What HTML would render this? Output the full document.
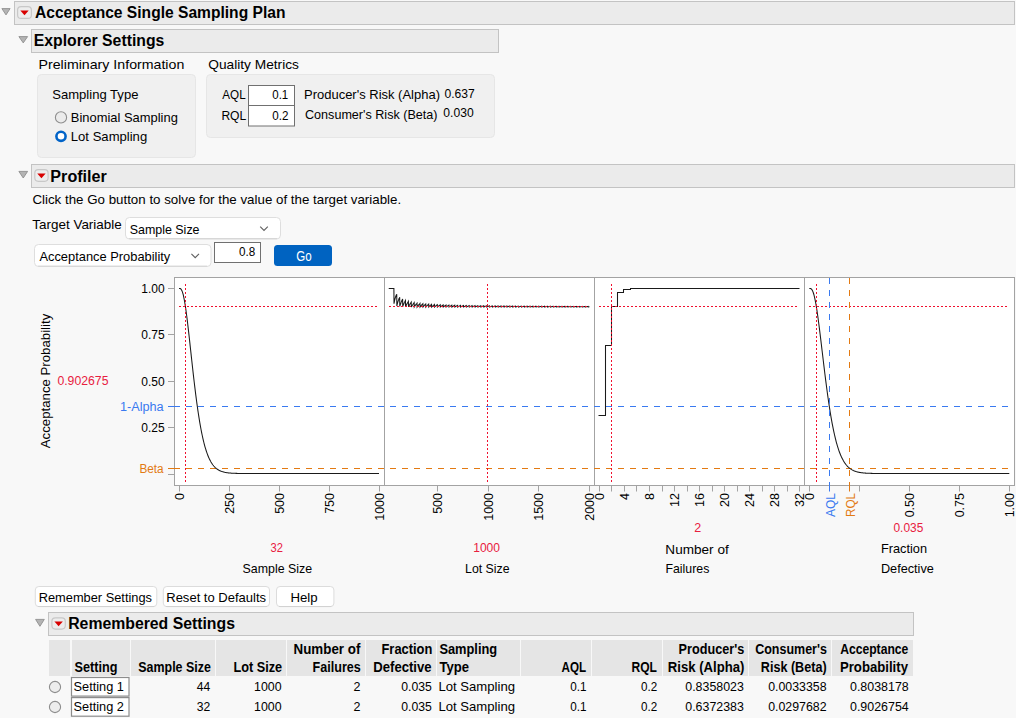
<!DOCTYPE html>
<html><head><meta charset="utf-8"><style>
html,body{margin:0;padding:0;background:#f8f8f8;}
svg{display:block;font-family:"Liberation Sans",sans-serif;}
</style></head><body>
<svg width="1016" height="718" viewBox="0 0 1016 718">
<rect x="0" y="0" width="1016" height="718" fill="#f8f8f8" stroke="none" stroke-width="1" rx="0" />
<rect x="14.5" y="1.5" width="1000" height="23" fill="#ebebeb" stroke="#c3c3c3" stroke-width="1" rx="0" />
<polygon points="1.9,8.6 10.1,8.6 6.0,14.9" fill="#b4b4b4" stroke="#8e8e8e" stroke-width="0.9" stroke-linejoin="miter"/>
<rect x="17.6" y="6.6" width="13.8" height="11.8" fill="#ededed" stroke="#c8c8c8" stroke-width="1.2" rx="3.5" />
<polygon points="20.3,10.6 28.7,10.6 24.5,15.2" fill="#d80000"/>
<text x="35.00" y="17.70" font-size="16" font-weight="bold" fill="#000" textLength="250.44" lengthAdjust="spacingAndGlyphs" >Acceptance Single Sampling Plan</text>
<rect x="31.5" y="29.5" width="467" height="23" fill="#ebebeb" stroke="#c3c3c3" stroke-width="1" rx="0" />
<polygon points="18.9,36.6 27.6,36.6 23.25,42.9" fill="#b4b4b4" stroke="#8e8e8e" stroke-width="0.9" stroke-linejoin="miter"/>
<text x="33.82" y="46.00" font-size="16" font-weight="bold" fill="#000" textLength="130.46" lengthAdjust="spacingAndGlyphs" >Explorer Settings</text>
<text x="38.54" y="69.10" font-size="13.33" font-weight="normal" fill="#000" textLength="145.76" lengthAdjust="spacingAndGlyphs" >Preliminary Information</text>
<rect x="37.5" y="74.5" width="158" height="83" fill="#f0f0f0" stroke="#e6e6e6" stroke-width="1" rx="4" />
<text x="52.22" y="99.20" font-size="13.33" font-weight="normal" fill="#000" textLength="86.20" lengthAdjust="spacingAndGlyphs" >Sampling Type</text>
<circle cx="61" cy="117.4" r="5.6" fill="#ebebeb" stroke="#8e8e8e" stroke-width="1.1"/>
<text x="70.83" y="122.20" font-size="13.33" font-weight="normal" fill="#000" textLength="107.05" lengthAdjust="spacingAndGlyphs" >Binomial Sampling</text>
<circle cx="61" cy="136.3" r="4.6" fill="#ffffff" stroke="#0063c8" stroke-width="2.6"/>
<text x="70.82" y="141.00" font-size="13.33" font-weight="normal" fill="#000" textLength="76.36" lengthAdjust="spacingAndGlyphs" >Lot Sampling</text>
<text x="208.30" y="69.10" font-size="13.33" font-weight="normal" fill="#000" textLength="90.64" lengthAdjust="spacingAndGlyphs" >Quality Metrics</text>
<rect x="206.5" y="74.5" width="288" height="63" fill="#f0f0f0" stroke="#e6e6e6" stroke-width="1" rx="4" />
<text x="222.30" y="98.90" font-size="13.33" font-weight="normal" fill="#000" textLength="23.31" lengthAdjust="spacingAndGlyphs" >AQL</text>
<text x="221.39" y="119.90" font-size="13.33" font-weight="normal" fill="#000" textLength="24.88" lengthAdjust="spacingAndGlyphs" >RQL</text>
<rect x="248.5" y="85.5" width="46" height="20" fill="#fff" stroke="#707070" stroke-width="1" rx="0" />
<rect x="248.5" y="105.5" width="46" height="20.5" fill="#fff" stroke="#707070" stroke-width="1" rx="0" />
<text x="272.30" y="98.90" font-size="13.33" font-weight="normal" fill="#000" textLength="15.96" lengthAdjust="spacingAndGlyphs" >0.1</text>
<text x="272.30" y="119.90" font-size="13.33" font-weight="normal" fill="#000" textLength="16.16" lengthAdjust="spacingAndGlyphs" >0.2</text>
<text x="304.03" y="98.90" font-size="13.33" font-weight="normal" fill="#000" textLength="135.94" lengthAdjust="spacingAndGlyphs" >Producer's Risk (Alpha)</text>
<text x="444.50" y="97.70" font-size="12" font-weight="normal" fill="#000" textLength="30.33" lengthAdjust="spacingAndGlyphs" >0.637</text>
<text x="305.00" y="118.70" font-size="13.33" font-weight="normal" fill="#000" textLength="132.50" lengthAdjust="spacingAndGlyphs" >Consumer's Risk (Beta)</text>
<text x="443.30" y="117.40" font-size="12" font-weight="normal" fill="#000" textLength="30.33" lengthAdjust="spacingAndGlyphs" >0.030</text>
<rect x="31.5" y="164.5" width="983" height="23" fill="#ebebeb" stroke="#c3c3c3" stroke-width="1" rx="0" />
<polygon points="18.9,171.4 27.6,171.4 23.25,178.0" fill="#b4b4b4" stroke="#8e8e8e" stroke-width="0.9" stroke-linejoin="miter"/>
<rect x="34.800000000000004" y="169.7" width="13.3" height="11.600000000000012" fill="#ededed" stroke="#c8c8c8" stroke-width="1.2" rx="3.5" />
<polygon points="37.25,173.6 45.650000000000006,173.6 41.45,178.2" fill="#d80000"/>
<text x="50.39" y="181.70" font-size="16" font-weight="bold" fill="#000" textLength="56.42" lengthAdjust="spacingAndGlyphs" >Profiler</text>
<text x="32.40" y="204.00" font-size="13.33" font-weight="normal" fill="#000" textLength="368.75" lengthAdjust="spacingAndGlyphs" >Click the Go button to solve for the value of the target variable.</text>
<text x="32.30" y="228.70" font-size="13.33" font-weight="normal" fill="#000" textLength="89.48" lengthAdjust="spacingAndGlyphs" >Target Variable</text>
<rect x="125.5" y="217.5" width="155" height="21.5" fill="#fff" stroke="#dedede" stroke-width="1" rx="4" />
<text x="129.67" y="233.80" font-size="13.33" font-weight="normal" fill="#000" textLength="69.87" lengthAdjust="spacingAndGlyphs" >Sample Size</text>
<polyline points="260.2,226.6 264,230.4 267.8,226.6" fill="none" stroke="#606060" stroke-width="1.1"/>
<path d="M129,238.6 H277" stroke="#d4d4d4" stroke-width="1"/>
<rect x="34.5" y="244.5" width="176.5" height="22" fill="#fff" stroke="#dedede" stroke-width="1" rx="4" />
<text x="39.40" y="261.00" font-size="13.33" font-weight="normal" fill="#000" textLength="130.91" lengthAdjust="spacingAndGlyphs" >Acceptance Probability</text>
<polyline points="191.4,253.8 195.2,257.6 199.0,253.8" fill="none" stroke="#606060" stroke-width="1.1"/>
<path d="M38,266.1 H207" stroke="#d4d4d4" stroke-width="1"/>
<rect x="214.5" y="242.5" width="46" height="20" fill="#fff" stroke="#707070" stroke-width="1" rx="0" />
<text x="238.90" y="256.00" font-size="13.33" font-weight="normal" fill="#000" textLength="16.27" lengthAdjust="spacingAndGlyphs" >0.8</text>
<rect x="274" y="245" width="58" height="21" fill="#0063c1" stroke="none" stroke-width="1" rx="3.5" />
<text x="296.20" y="260.90" font-size="14.2" font-weight="normal" fill="#fff" textLength="15.45" lengthAdjust="spacingAndGlyphs" >Go</text>
<rect x="174.5" y="277.5" width="840" height="208" fill="#fff" stroke="#a3a3a3" stroke-width="1" rx="0" />
<line x1="384.5" y1="277" x2="384.5" y2="486" stroke="#a3a3a3" stroke-width="1" />
<line x1="594.5" y1="277" x2="594.5" y2="486" stroke="#a3a3a3" stroke-width="1" />
<line x1="804.5" y1="277" x2="804.5" y2="486" stroke="#a3a3a3" stroke-width="1" />
<line x1="168" y1="288.5" x2="174" y2="288.5" stroke="#a3a3a3" stroke-width="1" />
<text x="141.30" y="292.70" font-size="12" font-weight="normal" fill="#000" >1.00</text>
<line x1="168" y1="334.5" x2="174" y2="334.5" stroke="#a3a3a3" stroke-width="1" />
<text x="141.30" y="338.70" font-size="12" font-weight="normal" fill="#000" >0.75</text>
<line x1="168" y1="381.5" x2="174" y2="381.5" stroke="#a3a3a3" stroke-width="1" />
<text x="141.30" y="385.70" font-size="12" font-weight="normal" fill="#000" >0.50</text>
<line x1="168" y1="427.5" x2="174" y2="427.5" stroke="#a3a3a3" stroke-width="1" />
<text x="141.30" y="431.70" font-size="12" font-weight="normal" fill="#000" >0.25</text>
<line x1="168" y1="474.5" x2="174" y2="474.5" stroke="#a3a3a3" stroke-width="1" />
<line x1="168" y1="406.5" x2="174.5" y2="406.5" stroke="#3a7af0" stroke-width="1" />
<line x1="168" y1="468.5" x2="174.5" y2="468.5" stroke="#e37a12" stroke-width="1" />
<line x1="174" y1="406.5" x2="1014" y2="406.5" stroke="#3a7af0" stroke-width="1" stroke-dasharray="6,6" />
<line x1="174" y1="468.5" x2="1014" y2="468.5" stroke="#e37a12" stroke-width="1" stroke-dasharray="6,6" />
<text x="119.94" y="410.60" font-size="12" font-weight="normal" fill="#3a7af0" textLength="43.70" lengthAdjust="spacingAndGlyphs" >1-Alpha</text>
<text x="139.42" y="472.60" font-size="12" font-weight="normal" fill="#e37a12" textLength="24.28" lengthAdjust="spacingAndGlyphs" >Beta</text>
<text transform="translate(49.8,381) rotate(-90)" text-anchor="middle" font-size="13.6" textLength="134.5" lengthAdjust="spacingAndGlyphs">Acceptance Probability</text>
<text x="57.40" y="385.10" font-size="12" font-weight="normal" fill="#e8203f" textLength="51.06" lengthAdjust="spacingAndGlyphs" >0.902675</text>
<polyline fill="none" stroke="#1a1a1a" stroke-width="1.05" points="179.00,288.40 179.40,288.40 179.80,288.43 180.20,288.54 180.60,288.76 181.00,289.14 181.40,289.69 181.80,290.43 182.20,291.38 182.60,292.54 183.00,293.91 183.40,295.49 183.80,297.29 184.20,299.29 184.60,301.48 185.00,303.86 185.40,306.41 185.80,309.13 186.20,312.00 186.60,315.01 187.00,318.13 187.40,321.38 187.80,324.71 188.20,328.14 188.60,331.63 189.00,335.18 189.40,338.78 189.80,342.42 190.20,346.08 190.60,349.75 191.00,353.43 191.40,357.10 191.80,360.76 192.20,364.39 192.60,368.00 193.00,371.57 193.40,375.10 193.80,378.57 194.20,382.00 194.60,385.37 195.00,388.67 195.40,391.91 195.80,395.08 196.20,398.18 196.60,401.20 197.00,404.15 197.40,407.02 197.80,409.81 198.20,412.52 198.60,415.15 199.00,417.70 199.40,420.17 199.80,422.56 200.20,424.88 200.60,427.11 201.00,429.26 201.40,431.34 201.80,433.34 202.20,435.26 202.60,437.12 203.00,438.90 203.40,440.61 203.80,442.25 204.20,443.82 204.60,445.33 205.00,446.77 205.40,448.15 205.80,449.47 206.20,450.73 206.60,451.94 207.00,453.09 207.40,454.19 207.80,455.24 208.20,456.24 208.60,457.19 209.00,458.09 209.40,458.95 209.80,459.77 210.20,460.55 210.60,461.29 211.00,461.99 211.40,462.65 211.80,463.29 212.20,463.88 212.60,464.45 213.00,464.99 213.40,465.49 213.80,465.98 214.20,466.43 214.60,466.86 215.00,467.27 215.40,467.65 215.80,468.01 216.20,468.35 216.60,468.67 217.00,468.98 217.40,469.26 217.80,469.53 218.20,469.79 218.60,470.02 219.00,470.25 219.40,470.46 219.80,470.66 220.20,470.84 220.60,471.02 221.00,471.18 221.40,471.34 221.80,471.48 222.20,471.62 222.60,471.75 223.00,471.86 223.40,471.98 223.80,472.08 224.20,472.18 224.60,472.27 225.00,472.36 225.40,472.44 225.80,472.51 226.20,472.58 226.60,472.65 227.00,472.71 227.40,472.76 227.80,472.82 228.20,472.86 228.60,472.91 229.00,472.95 229.40,472.99 229.80,473.03 230.20,473.07 230.60,473.10 231.00,473.13 231.40,473.16 231.80,473.18 232.20,473.21 232.60,473.23 233.00,473.25 233.40,473.27 233.80,473.29 234.20,473.30 234.60,473.32 235.00,473.33 235.40,473.34 235.80,473.36 236.20,473.37 236.60,473.38 237.00,473.39 237.40,473.40 237.80,473.41 238.20,473.41 238.60,473.42 239.00,473.43 239.40,473.43 239.80,473.44 240.20,473.44 240.60,473.45 241.00,473.45 241.40,473.46 241.80,473.46 242.20,473.46 242.60,473.47 243.00,473.47 243.40,473.47 243.80,473.47 244.20,473.48 244.60,473.48 245.00,473.48 245.40,473.48 245.80,473.48 246.20,473.48 246.60,473.49 247.00,473.49 247.40,473.49 247.80,473.49 248.20,473.49 248.60,473.49 249.00,473.49 249.40,473.49 249.80,473.49 250.20,473.49 250.60,473.49 251.00,473.50 251.40,473.50 251.80,473.50 252.20,473.50 252.60,473.50 253.00,473.50 253.40,473.50 253.80,473.50 254.20,473.50 254.60,473.50 255.00,473.50 255.40,473.50 255.80,473.50 256.20,473.50 256.60,473.50 257.00,473.50 257.40,473.50 257.80,473.50 258.20,473.50 258.60,473.50 259.00,473.50 259.40,473.50 259.80,473.50 260.20,473.50 260.60,473.50 261.00,473.50 261.40,473.50 261.80,473.50 262.20,473.50 262.60,473.50 263.00,473.50 263.40,473.50 263.80,473.50 264.20,473.50 264.60,473.50 265.00,473.50 265.40,473.50 265.80,473.50 266.20,473.50 266.60,473.50 267.00,473.50 267.40,473.50 267.80,473.50 268.20,473.50 268.60,473.50 269.00,473.50 269.40,473.50 269.80,473.50 270.20,473.50 270.60,473.50 271.00,473.50 271.40,473.50 271.80,473.50 272.20,473.50 272.60,473.50 273.00,473.50 273.40,473.50 273.80,473.50 274.20,473.50 274.60,473.50 275.00,473.50 275.40,473.50 275.80,473.50 276.20,473.50 276.60,473.50 277.00,473.50 277.40,473.50 277.80,473.50 278.20,473.50 278.60,473.50 279.00,473.50 279.40,473.50 279.80,473.50 280.20,473.50 280.60,473.50 281.00,473.50 281.40,473.50 281.80,473.50 282.20,473.50 282.60,473.50 283.00,473.50 283.40,473.50 283.80,473.50 284.20,473.50 284.60,473.50 285.00,473.50 285.40,473.50 285.80,473.50 286.20,473.50 286.60,473.50 287.00,473.50 287.40,473.50 287.80,473.50 288.20,473.50 288.60,473.50 289.00,473.50 289.40,473.50 289.80,473.50 290.20,473.50 290.60,473.50 291.00,473.50 291.40,473.50 291.80,473.50 292.20,473.50 292.60,473.50 293.00,473.50 293.40,473.50 293.80,473.50 294.20,473.50 294.60,473.50 295.00,473.50 295.40,473.50 295.80,473.50 296.20,473.50 296.60,473.50 297.00,473.50 297.40,473.50 297.80,473.50 298.20,473.50 298.60,473.50 299.00,473.50 299.40,473.50 299.80,473.50 300.20,473.50 300.60,473.50 301.00,473.50 301.40,473.50 301.80,473.50 302.20,473.50 302.60,473.50 303.00,473.50 303.40,473.50 303.80,473.50 304.20,473.50 304.60,473.50 305.00,473.50 305.40,473.50 305.80,473.50 306.20,473.50 306.60,473.50 307.00,473.50 307.40,473.50 307.80,473.50 308.20,473.50 308.60,473.50 309.00,473.50 309.40,473.50 309.80,473.50 310.20,473.50 310.60,473.50 311.00,473.50 311.40,473.50 311.80,473.50 312.20,473.50 312.60,473.50 313.00,473.50 313.40,473.50 313.80,473.50 314.20,473.50 314.60,473.50 315.00,473.50 315.40,473.50 315.80,473.50 316.20,473.50 316.60,473.50 317.00,473.50 317.40,473.50 317.80,473.50 318.20,473.50 318.60,473.50 319.00,473.50 319.40,473.50 319.80,473.50 320.20,473.50 320.60,473.50 321.00,473.50 321.40,473.50 321.80,473.50 322.20,473.50 322.60,473.50 323.00,473.50 323.40,473.50 323.80,473.50 324.20,473.50 324.60,473.50 325.00,473.50 325.40,473.50 325.80,473.50 326.20,473.50 326.60,473.50 327.00,473.50 327.40,473.50 327.80,473.50 328.20,473.50 328.60,473.50 329.00,473.50 329.40,473.50 329.80,473.50 330.20,473.50 330.60,473.50 331.00,473.50 331.40,473.50 331.80,473.50 332.20,473.50 332.60,473.50 333.00,473.50 333.40,473.50 333.80,473.50 334.20,473.50 334.60,473.50 335.00,473.50 335.40,473.50 335.80,473.50 336.20,473.50 336.60,473.50 337.00,473.50 337.40,473.50 337.80,473.50 338.20,473.50 338.60,473.50 339.00,473.50 339.40,473.50 339.80,473.50 340.20,473.50 340.60,473.50 341.00,473.50 341.40,473.50 341.80,473.50 342.20,473.50 342.60,473.50 343.00,473.50 343.40,473.50 343.80,473.50 344.20,473.50 344.60,473.50 345.00,473.50 345.40,473.50 345.80,473.50 346.20,473.50 346.60,473.50 347.00,473.50 347.40,473.50 347.80,473.50 348.20,473.50 348.60,473.50 349.00,473.50 349.40,473.50 349.80,473.50 350.20,473.50 350.60,473.50 351.00,473.50 351.40,473.50 351.80,473.50 352.20,473.50 352.60,473.50 353.00,473.50 353.40,473.50 353.80,473.50 354.20,473.50 354.60,473.50 355.00,473.50 355.40,473.50 355.80,473.50 356.20,473.50 356.60,473.50 357.00,473.50 357.40,473.50 357.80,473.50 358.20,473.50 358.60,473.50 359.00,473.50 359.40,473.50 359.80,473.50 360.20,473.50 360.60,473.50 361.00,473.50 361.40,473.50 361.80,473.50 362.20,473.50 362.60,473.50 363.00,473.50 363.40,473.50 363.80,473.50 364.20,473.50 364.60,473.50 365.00,473.50 365.40,473.50 365.80,473.50 366.20,473.50 366.60,473.50 367.00,473.50 367.40,473.50 367.80,473.50 368.20,473.50 368.60,473.50 369.00,473.50 369.40,473.50 369.80,473.50 370.20,473.50 370.60,473.50 371.00,473.50 371.40,473.50 371.80,473.50 372.20,473.50 372.60,473.50 373.00,473.50 373.40,473.50 373.80,473.50 374.20,473.50 374.60,473.50 375.00,473.50 375.40,473.50 375.80,473.50 376.20,473.50 376.60,473.50 377.00,473.50 377.40,473.50 377.80,473.50 378.20,473.50 378.60,473.50 379.00,473.50"/>
<polyline fill="none" stroke="#1a1a1a" stroke-width="1.05" points="388.73,288.40 388.83,288.40 388.93,288.40 389.03,288.40 389.13,288.40 389.24,288.40 389.34,288.40 389.44,288.40 389.54,288.40 389.64,288.40 389.74,288.40 389.84,288.40 389.94,288.40 390.05,288.40 390.15,288.40 390.25,288.40 390.35,288.40 390.45,288.40 390.55,288.40 390.65,288.40 390.76,288.40 390.86,288.40 390.96,288.40 391.06,288.40 391.16,288.40 391.26,288.40 391.36,288.40 391.47,288.40 391.57,288.40 391.67,288.40 391.77,288.40 391.87,288.40 391.97,288.40 392.07,288.40 392.18,288.40 392.28,288.40 392.38,288.40 392.48,288.40 392.58,288.40 392.68,288.40 392.78,288.40 392.89,288.40 392.99,288.40 393.09,288.40 393.19,288.40 393.29,288.40 393.39,288.40 393.49,288.40 393.60,288.40 393.70,288.40 393.80,288.40 393.90,288.40 394.00,303.79 394.10,303.16 394.20,302.56 394.31,302.00 394.41,301.46 394.51,300.95 394.61,300.47 394.71,300.01 394.81,299.57 394.91,299.16 395.01,298.77 395.12,298.39 395.22,298.04 395.32,297.70 395.42,297.37 395.52,297.06 395.62,296.77 395.72,296.48 395.83,296.21 395.93,295.96 396.03,295.71 396.13,295.48 396.23,295.25 396.33,295.03 396.43,294.83 396.54,294.63 396.64,294.44 396.74,294.25 396.84,306.02 396.94,305.55 397.04,305.09 397.14,304.65 397.25,304.22 397.35,303.81 397.45,303.42 397.55,303.03 397.65,302.66 397.75,302.30 397.85,301.96 397.96,301.62 398.06,301.30 398.16,300.98 398.26,300.68 398.36,300.39 398.46,300.10 398.56,299.82 398.67,299.56 398.77,299.30 398.87,299.05 398.97,298.80 399.07,298.57 399.17,298.34 399.27,298.11 399.38,297.90 399.48,297.69 399.58,297.48 399.68,297.29 399.78,306.41 399.88,306.05 399.98,305.70 400.08,305.36 400.19,305.03 400.29,304.71 400.39,304.40 400.49,304.09 400.59,303.79 400.69,303.50 400.79,303.21 400.90,302.94 401.00,302.67 401.10,302.40 401.20,302.14 401.30,301.89 401.40,301.65 401.50,301.41 401.61,301.17 401.71,300.94 401.81,300.72 401.91,300.50 402.01,300.29 402.11,300.08 402.21,299.88 402.32,299.68 402.42,299.49 402.52,299.30 402.62,299.11 402.72,306.54 402.82,306.26 402.92,305.97 403.03,305.70 403.13,305.43 403.23,305.16 403.33,304.91 403.43,304.65 403.53,304.40 403.63,304.16 403.74,303.92 403.84,303.69 403.94,303.46 404.04,303.23 404.14,303.01 404.24,302.79 404.34,302.58 404.44,302.37 404.55,302.17 404.65,301.97 404.75,301.77 404.85,301.58 404.95,301.39 405.05,301.21 405.15,301.02 405.26,300.84 405.36,300.67 405.46,300.50 405.56,306.83 405.66,306.59 405.76,306.35 405.86,306.11 405.97,305.88 406.07,305.66 406.17,305.43 406.27,305.21 406.37,305.00 406.47,304.78 406.57,304.58 406.68,304.37 406.78,304.17 406.88,303.97 406.98,303.77 407.08,303.58 407.18,303.39 407.28,303.21 407.39,303.03 407.49,302.85 407.59,302.67 407.69,302.49 407.79,302.32 407.89,302.15 407.99,301.99 408.10,301.82 408.20,301.66 408.30,301.51 408.40,301.35 408.50,306.81 408.60,306.60 408.70,306.40 408.81,306.20 408.91,306.00 409.01,305.80 409.11,305.61 409.21,305.42 409.31,305.23 409.41,305.04 409.51,304.86 409.62,304.68 409.72,304.51 409.82,304.33 409.92,304.16 410.02,303.99 410.12,303.82 410.22,303.66 410.33,303.49 410.43,303.33 410.53,303.18 410.63,303.02 410.73,302.87 410.83,302.71 410.93,302.56 411.04,302.42 411.14,302.27 411.24,302.13 411.34,306.97 411.44,306.78 411.54,306.60 411.64,306.42 411.75,306.25 411.85,306.07 411.95,305.90 412.05,305.73 412.15,305.56 412.25,305.40 412.35,305.23 412.46,305.07 412.56,304.91 412.66,304.75 412.76,304.60 412.86,304.44 412.96,304.29 413.06,304.14 413.17,303.99 413.27,303.85 413.37,303.70 413.47,303.56 413.57,303.42 413.67,303.28 413.77,303.14 413.88,303.01 413.98,302.87 414.08,302.74 414.18,302.61 414.28,306.92 414.38,306.76 414.48,306.60 414.58,306.44 414.69,306.28 414.79,306.12 414.89,305.97 414.99,305.82 415.09,305.67 415.19,305.52 415.29,305.37 415.40,305.23 415.50,305.08 415.60,304.94 415.70,304.80 415.80,304.66 415.90,304.53 416.00,304.39 416.11,304.26 416.21,304.12 416.31,303.99 416.41,303.86 416.51,303.73 416.61,303.61 416.71,303.48 416.82,303.36 416.92,303.23 417.02,303.11 417.12,307.03 417.22,306.88 417.32,306.73 417.42,306.59 417.53,306.44 417.63,306.30 417.73,306.16 417.83,306.02 417.93,305.89 418.03,305.75 418.13,305.62 418.24,305.48 418.34,305.35 418.44,305.22 418.54,305.09 418.64,304.97 418.74,304.84 418.84,304.71 418.95,304.59 419.05,304.47 419.15,304.34 419.25,304.22 419.35,304.11 419.45,303.99 419.55,303.87 419.65,303.75 419.76,303.64 419.86,303.53 419.96,303.41 420.06,306.97 420.16,306.84 420.26,306.71 420.36,306.58 420.47,306.45 420.57,306.32 420.67,306.19 420.77,306.07 420.87,305.94 420.97,305.82 421.07,305.69 421.18,305.57 421.28,305.45 421.38,305.33 421.48,305.21 421.58,305.10 421.68,304.98 421.78,304.87 421.89,304.75 421.99,304.64 422.09,304.53 422.19,304.42 422.29,304.31 422.39,304.20 422.49,304.09 422.60,303.98 422.70,303.88 422.80,303.77 422.90,303.67 423.00,306.93 423.10,306.81 423.20,306.69 423.31,306.57 423.41,306.45 423.51,306.33 423.61,306.21 423.71,306.10 423.81,305.98 423.91,305.87 424.02,305.76 424.12,305.65 424.22,305.53 424.32,305.42 424.42,305.31 424.52,305.21 424.62,305.10 424.72,304.99 424.83,304.89 424.93,304.78 425.03,304.68 425.13,304.58 425.23,304.47 425.33,304.37 425.43,304.27 425.54,304.17 425.64,304.07 425.74,303.97 425.84,307.01 425.94,306.89 426.04,306.78 426.14,306.67 426.25,306.56 426.35,306.45 426.45,306.34 426.55,306.23 426.65,306.13 426.75,306.02 426.85,305.91 426.96,305.81 427.06,305.71 427.16,305.60 427.26,305.50 427.36,305.40 427.46,305.30 427.56,305.20 427.67,305.10 427.77,305.00 427.87,304.90 427.97,304.81 428.07,304.71 428.17,304.62 428.27,304.52 428.38,304.43 428.48,304.33 428.58,304.24 428.68,304.15 428.78,306.96 428.88,306.86 428.98,306.76 429.09,306.65 429.19,306.55 429.29,306.45 429.39,306.35 429.49,306.25 429.59,306.15 429.69,306.05 429.79,305.95 429.90,305.85 430.00,305.76 430.10,305.66 430.20,305.57 430.30,305.47 430.40,305.38 430.50,305.28 430.61,305.19 430.71,305.10 430.81,305.01 430.91,304.92 431.01,304.83 431.11,304.74 431.21,304.65 431.32,304.56 431.42,304.47 431.52,304.39 431.62,307.03 431.72,306.93 431.82,306.83 431.92,306.73 432.03,306.64 432.13,306.54 432.23,306.45 432.33,306.35 432.43,306.26 432.53,306.17 432.63,306.07 432.74,305.98 432.84,305.89 432.94,305.80 433.04,305.71 433.14,305.62 433.24,305.53 433.34,305.44 433.45,305.36 433.55,305.27 433.65,305.18 433.75,305.10 433.85,305.01 433.95,304.93 434.05,304.84 434.16,304.76 434.26,304.68 434.36,304.60 434.46,304.51 434.56,306.99 434.66,306.90 434.76,306.80 434.87,306.71 434.97,306.62 435.07,306.53 435.17,306.45 435.27,306.36 435.37,306.27 435.47,306.18 435.57,306.10 435.68,306.01 435.78,305.92 435.88,305.84 435.98,305.75 436.08,305.67 436.18,305.59 436.28,305.50 436.39,305.42 436.49,305.34 436.59,305.26 436.69,305.18 436.79,305.10 436.89,305.02 436.99,304.94 437.10,304.86 437.20,304.78 437.30,304.70 437.40,307.04 437.50,306.95 437.60,306.87 437.70,306.78 437.81,306.70 437.91,306.61 438.01,306.53 438.11,306.44 438.21,306.36 438.31,306.28 438.41,306.20 438.52,306.11 438.62,306.03 438.72,305.95 438.82,305.87 438.92,305.79 439.02,305.71 439.12,305.63 439.23,305.56 439.33,305.48 439.43,305.40 439.53,305.32 439.63,305.25 439.73,305.17 439.83,305.10 439.94,305.02 440.04,304.95 440.14,304.87 440.24,304.80 440.34,307.00 440.44,306.92 440.54,306.84 440.64,306.76 440.75,306.68 440.85,306.60 440.95,306.52 441.05,306.44 441.15,306.36 441.25,306.28 441.35,306.21 441.46,306.13 441.56,306.05 441.66,305.98 441.76,305.90 441.86,305.83 441.96,305.75 442.06,305.68 442.17,305.60 442.27,305.53 442.37,305.45 442.47,305.38 442.57,305.31 442.67,305.24 442.77,305.16 442.88,305.09 442.98,305.02 443.08,304.95 443.18,304.88 443.28,306.97 443.38,306.89 443.48,306.82 443.59,306.74 443.69,306.66 443.79,306.59 443.89,306.51 443.99,306.44 444.09,306.36 444.19,306.29 444.30,306.22 444.40,306.14 444.50,306.07 444.60,306.00 444.70,305.93 444.80,305.86 444.90,305.78 445.00,305.71 445.11,305.64 445.21,305.57 445.31,305.50 445.41,305.43 445.51,305.36 445.61,305.30 445.71,305.23 445.82,305.16 445.92,305.09 446.02,305.02 446.12,307.02 446.22,306.94 446.32,306.87 446.42,306.80 446.53,306.72 446.63,306.65 446.73,306.58 446.83,306.51 446.93,306.44 447.03,306.37 447.13,306.30 447.24,306.23 447.34,306.16 447.44,306.09 447.54,306.02 447.64,305.95 447.74,305.88 447.84,305.81 447.95,305.75 448.05,305.68 448.15,305.61 448.25,305.55 448.35,305.48 448.45,305.41 448.55,305.35 448.66,305.28 448.76,305.22 448.86,305.15 448.96,305.09 449.06,306.99 449.16,306.92 449.26,306.85 449.37,306.78 449.47,306.71 449.57,306.64 449.67,306.57 449.77,306.50 449.87,306.44 449.97,306.37 450.07,306.30 450.18,306.23 450.28,306.17 450.38,306.10 450.48,306.04 450.58,305.97 450.68,305.91 450.78,305.84 450.89,305.78 450.99,305.71 451.09,305.65 451.19,305.59 451.29,305.52 451.39,305.46 451.49,305.40 451.60,305.33 451.70,305.27 451.80,305.21 451.90,307.02 452.00,306.96 452.10,306.89 452.20,306.82 452.31,306.76 452.41,306.69 452.51,306.63 452.61,306.56 452.71,306.50 452.81,306.43 452.91,306.37 453.02,306.30 453.12,306.24 453.22,306.18 453.32,306.12 453.42,306.05 453.52,305.99 453.62,305.93 453.73,305.87 453.83,305.80 453.93,305.74 454.03,305.68 454.13,305.62 454.23,305.56 454.33,305.50 454.44,305.44 454.54,305.38 454.64,305.32 454.74,305.26 454.84,307.00 454.94,306.93 455.04,306.87 455.14,306.81 455.25,306.74 455.35,306.68 455.45,306.62 455.55,306.55 455.65,306.49 455.75,306.43 455.85,306.37 455.96,306.31 456.06,306.25 456.16,306.19 456.26,306.13 456.36,306.07 456.46,306.01 456.56,305.95 456.67,305.89 456.77,305.83 456.87,305.77 456.97,305.71 457.07,305.65 457.17,305.60 457.27,305.54 457.38,305.48 457.48,305.42 457.58,305.37 457.68,307.03 457.78,306.97 457.88,306.91 457.98,306.85 458.09,306.79 458.19,306.73 458.29,306.67 458.39,306.61 458.49,306.55 458.59,306.49 458.69,306.43 458.80,306.37 458.90,306.31 459.00,306.25 459.10,306.20 459.20,306.14 459.30,306.08 459.40,306.02 459.51,305.97 459.61,305.91 459.71,305.85 459.81,305.80 459.91,305.74 460.01,305.68 460.11,305.63 460.21,305.57 460.32,305.52 460.42,305.46 460.52,305.41 460.62,307.01 460.72,306.95 460.82,306.89 460.92,306.83 461.03,306.77 461.13,306.71 461.23,306.66 461.33,306.60 461.43,306.54 461.53,306.48 461.63,306.43 461.74,306.37 461.84,306.31 461.94,306.26 462.04,306.20 462.14,306.15 462.24,306.09 462.34,306.04 462.45,305.98 462.55,305.93 462.65,305.87 462.75,305.82 462.85,305.76 462.95,305.71 463.05,305.66 463.16,305.60 463.26,305.55 463.36,305.50 463.46,305.45 463.56,306.98 463.66,306.92 463.76,306.87 463.87,306.81 463.97,306.76 464.07,306.70 464.17,306.65 464.27,306.59 464.37,306.54 464.47,306.48 464.58,306.43 464.68,306.37 464.78,306.32 464.88,306.26 464.98,306.21 465.08,306.16 465.18,306.10 465.28,306.05 465.39,306.00 465.49,305.94 465.59,305.89 465.69,305.84 465.79,305.79 465.89,305.74 465.99,305.68 466.10,305.63 466.20,305.58 466.30,305.53 466.40,307.01 466.50,306.96 466.60,306.90 466.70,306.85 466.81,306.80 466.91,306.74 467.01,306.69 467.11,306.64 467.21,306.58 467.31,306.53 467.41,306.48 467.52,306.42 467.62,306.37 467.72,306.32 467.82,306.27 467.92,306.22 468.02,306.16 468.12,306.11 468.23,306.06 468.33,306.01 468.43,305.96 468.53,305.91 468.63,305.86 468.73,305.81 468.83,305.76 468.94,305.71 469.04,305.66 469.14,305.61 469.24,305.56 469.34,306.99 469.44,306.94 469.54,306.88 469.65,306.83 469.75,306.78 469.85,306.73 469.95,306.68 470.05,306.63 470.15,306.58 470.25,306.52 470.36,306.47 470.46,306.42 470.56,306.37 470.66,306.32 470.76,306.27 470.86,306.22 470.96,306.17 471.06,306.12 471.17,306.07 471.27,306.02 471.37,305.98 471.47,305.93 471.57,305.88 471.67,305.83 471.77,305.78 471.88,305.73 471.98,305.69 472.08,305.64 472.18,307.02 472.28,306.97 472.38,306.92 472.48,306.87 472.59,306.82 472.69,306.77 472.79,306.72 472.89,306.67 472.99,306.62 473.09,306.57 473.19,306.52 473.30,306.47 473.40,306.42 473.50,306.37 473.60,306.32 473.70,306.28 473.80,306.23 473.90,306.18 474.01,306.13 474.11,306.08 474.21,306.04 474.31,305.99 474.41,305.94 474.51,305.90 474.61,305.85 474.72,305.80 474.82,305.76 474.92,305.71 475.02,305.66 475.12,307.00 475.22,306.95 475.32,306.90 475.43,306.85 475.53,306.80 475.63,306.75 475.73,306.71 475.83,306.66 475.93,306.61 476.03,306.56 476.13,306.51 476.24,306.47 476.34,306.42 476.44,306.37 476.54,306.33 476.64,306.28 476.74,306.23 476.84,306.19 476.95,306.14 477.05,306.09 477.15,306.05 477.25,306.00 477.35,305.96 477.45,305.91 477.55,305.87 477.66,305.82 477.76,305.78 477.86,305.73 477.96,307.02 478.06,306.98 478.16,306.93 478.26,306.88 478.37,306.84 478.47,306.79 478.57,306.74 478.67,306.69 478.77,306.65 478.87,306.60 478.97,306.56 479.08,306.51 479.18,306.46 479.28,306.42 479.38,306.37 479.48,306.33 479.58,306.28 479.68,306.24 479.79,306.19 479.89,306.15 479.99,306.10 480.09,306.06 480.19,306.01 480.29,305.97 480.39,305.93 480.50,305.88 480.60,305.84 480.70,305.79 480.80,305.75 480.90,307.00 481.00,306.96 481.10,306.91 481.20,306.87 481.31,306.82 481.41,306.78 481.51,306.73 481.61,306.68 481.71,306.64 481.81,306.60 481.91,306.55 482.02,306.51 482.12,306.46 482.22,306.42 482.32,306.37 482.42,306.33 482.52,306.29 482.62,306.24 482.73,306.20 482.83,306.15 482.93,306.11 483.03,306.07 483.13,306.03 483.23,305.98 483.33,305.94 483.44,305.90 483.54,305.85 483.64,305.81 483.74,305.77 483.84,306.98 483.94,306.94 484.04,306.90 484.15,306.85 484.25,306.81 484.35,306.76 484.45,306.72 484.55,306.68 484.65,306.63 484.75,306.59 484.86,306.55 484.96,306.50 485.06,306.46 485.16,306.42 485.26,306.37 485.36,306.33 485.46,306.29 485.56,306.25 485.67,306.20 485.77,306.16 485.87,306.12 485.97,306.08 486.07,306.04 486.17,305.99 486.27,305.95 486.38,305.91 486.48,305.87 486.58,305.83 486.68,307.01 486.78,306.97 486.88,306.92 486.98,306.88 487.09,306.84 487.19,306.79 487.29,306.75 487.39,306.71 487.49,306.67 487.59,306.62 487.69,306.58 487.80,306.54 487.90,306.50 488.00,306.46 488.10,306.41 488.20,306.37 488.30,306.33 488.40,306.29 488.51,306.25 488.61,306.21 488.71,306.17 488.81,306.13 488.91,306.09 489.01,306.05 489.11,306.01 489.22,305.97 489.32,305.92 489.42,305.88 489.52,305.84 489.62,306.99 489.72,306.95 489.82,306.91 489.93,306.87 490.03,306.82 490.13,306.78 490.23,306.74 490.33,306.70 490.43,306.66 490.53,306.62 490.63,306.58 490.74,306.54 490.84,306.49 490.94,306.45 491.04,306.41 491.14,306.37 491.24,306.33 491.34,306.29 491.45,306.25 491.55,306.21 491.65,306.17 491.75,306.13 491.85,306.09 491.95,306.06 492.05,306.02 492.16,305.98 492.26,305.94 492.36,305.90 492.46,307.01 492.56,306.97 492.66,306.93 492.76,306.89 492.87,306.85 492.97,306.81 493.07,306.77 493.17,306.73 493.27,306.69 493.37,306.65 493.47,306.61 493.58,306.57 493.68,306.53 493.78,306.49 493.88,306.45 493.98,306.41 494.08,306.37 494.18,306.33 494.29,306.30 494.39,306.26 494.49,306.22 494.59,306.18 494.69,306.14 494.79,306.10 494.89,306.06 495.00,306.03 495.10,305.99 495.20,305.95 495.30,305.91 495.40,307.00 495.50,306.96 495.60,306.92 495.70,306.88 495.81,306.84 495.91,306.80 496.01,306.76 496.11,306.72 496.21,306.68 496.31,306.64 496.41,306.60 496.52,306.57 496.62,306.53 496.72,306.49 496.82,306.45 496.92,306.41 497.02,306.37 497.12,306.34 497.23,306.30 497.33,306.26 497.43,306.22 497.53,306.18 497.63,306.15 497.73,306.11 497.83,306.07 497.94,306.03 498.04,306.00 498.14,305.96 498.24,307.02 498.34,306.98 498.44,306.94 498.54,306.90 498.65,306.86 498.75,306.83 498.85,306.79 498.95,306.75 499.05,306.71 499.15,306.67 499.25,306.64 499.36,306.60 499.46,306.56 499.56,306.52 499.66,306.49 499.76,306.45 499.86,306.41 499.96,306.37 500.07,306.34 500.17,306.30 500.27,306.26 500.37,306.23 500.47,306.19 500.57,306.15 500.67,306.12 500.77,306.08 500.88,306.04 500.98,306.01 501.08,305.97 501.18,307.00 501.28,306.96 501.38,306.93 501.48,306.89 501.59,306.85 501.69,306.81 501.79,306.78 501.89,306.74 501.99,306.70 502.09,306.67 502.19,306.63 502.30,306.59 502.40,306.56 502.50,306.52 502.60,306.48 502.70,306.45 502.80,306.41 502.90,306.37 503.01,306.34 503.11,306.30 503.21,306.27 503.31,306.23 503.41,306.19 503.51,306.16 503.61,306.12 503.72,306.09 503.82,306.05 503.92,306.02 504.02,305.98 504.12,306.99 504.22,306.95 504.32,306.91 504.43,306.88 504.53,306.84 504.63,306.80 504.73,306.77 504.83,306.73 504.93,306.69 505.03,306.66 505.14,306.62 505.24,306.59 505.34,306.55 505.44,306.51 505.54,306.48 505.64,306.44 505.74,306.41 505.85,306.37 505.95,306.34 506.05,306.30 506.15,306.27 506.25,306.23 506.35,306.20 506.45,306.16 506.55,306.13 506.66,306.09 506.76,306.06 506.86,306.03 506.96,307.01 507.06,306.97 507.16,306.93 507.26,306.90 507.37,306.86 507.47,306.83 507.57,306.79 507.67,306.76 507.77,306.72 507.87,306.69 507.97,306.65 508.08,306.62 508.18,306.58 508.28,306.55 508.38,306.51 508.48,306.48 508.58,306.44 508.68,306.41 508.79,306.37 508.89,306.34 508.99,306.30 509.09,306.27 509.19,306.24 509.29,306.20 509.39,306.17 509.50,306.13 509.60,306.10 509.70,306.07 509.80,306.03 509.90,306.99 510.00,306.96 510.10,306.92 510.21,306.89 510.31,306.85 510.41,306.82 510.51,306.78 510.61,306.75 510.71,306.71 510.81,306.68 510.91,306.64 511.02,306.61 511.12,306.58 511.22,306.54 511.32,306.51 511.42,306.47 511.52,306.44 511.62,306.41 511.73,306.37 511.83,306.34 511.93,306.31 512.03,306.27 512.13,306.24 512.23,306.21 512.33,306.17 512.44,306.14 512.54,306.11 512.64,306.07 512.74,307.01 512.84,306.98 512.94,306.94 513.04,306.91 513.15,306.87 513.25,306.84 513.35,306.81 513.45,306.77 513.55,306.74 513.65,306.70 513.75,306.67 513.86,306.64 513.96,306.60 514.06,306.57 514.16,306.54 514.26,306.50 514.36,306.47 514.46,306.44 514.57,306.41 514.67,306.37 514.77,306.34 514.87,306.31 514.97,306.28 515.07,306.24 515.17,306.21 515.28,306.18 515.38,306.15 515.48,306.11 515.58,306.08 515.68,307.00 515.78,306.96 515.88,306.93 515.99,306.90 516.09,306.86 516.19,306.83 516.29,306.80 516.39,306.76 516.49,306.73 516.59,306.70 516.69,306.66 516.80,306.63 516.90,306.60 517.00,306.57 517.10,306.53 517.20,306.50 517.30,306.47 517.40,306.44 517.51,306.41 517.61,306.37 517.71,306.34 517.81,306.31 517.91,306.28 518.01,306.25 518.11,306.21 518.22,306.18 518.32,306.15 518.42,306.12 518.52,307.01 518.62,306.98 518.72,306.95 518.82,306.92 518.93,306.88 519.03,306.85 519.13,306.82 519.23,306.79 519.33,306.75 519.43,306.72 519.53,306.69 519.64,306.66 519.74,306.63 519.84,306.59 519.94,306.56 520.04,306.53 520.14,306.50 520.24,306.47 520.35,306.44 520.45,306.40 520.55,306.37 520.65,306.34 520.75,306.31 520.85,306.28 520.95,306.25 521.06,306.22 521.16,306.19 521.26,306.16 521.36,306.12 521.46,307.00 521.56,306.97 521.66,306.94 521.76,306.90 521.87,306.87 521.97,306.84 522.07,306.81 522.17,306.78 522.27,306.75 522.37,306.71 522.47,306.68 522.58,306.65 522.68,306.62 522.78,306.59 522.88,306.56 522.98,306.53 523.08,306.50 523.18,306.47 523.29,306.43 523.39,306.40 523.49,306.37 523.59,306.34 523.69,306.31 523.79,306.28 523.89,306.25 524.00,306.22 524.10,306.19 524.20,306.16 524.30,306.13 524.40,306.99 524.50,306.95 524.60,306.92 524.71,306.89 524.81,306.86 524.91,306.83 525.01,306.80 525.11,306.77 525.21,306.74 525.31,306.71 525.42,306.68 525.52,306.65 525.62,306.61 525.72,306.58 525.82,306.55 525.92,306.52 526.02,306.49 526.12,306.46 526.23,306.43 526.33,306.40 526.43,306.37 526.53,306.34 526.63,306.31 526.73,306.28 526.83,306.25 526.94,306.22 527.04,306.19 527.14,306.16 527.24,307.00 527.34,306.97 527.44,306.94 527.54,306.91 527.65,306.88 527.75,306.85 527.85,306.82 527.95,306.79 528.05,306.76 528.15,306.73 528.25,306.70 528.36,306.67 528.46,306.64 528.56,306.61 528.66,306.58 528.76,306.55 528.86,306.52 528.96,306.49 529.07,306.46 529.17,306.43 529.27,306.40 529.37,306.37 529.47,306.34 529.57,306.31 529.67,306.29 529.78,306.26 529.88,306.23 529.98,306.20 530.08,306.17 530.18,306.99 530.28,306.96 530.38,306.93 530.49,306.90 530.59,306.87 530.69,306.84 530.79,306.81 530.89,306.78 530.99,306.75 531.09,306.72 531.19,306.69 531.30,306.66 531.40,306.63 531.50,306.60 531.60,306.58 531.70,306.55 531.80,306.52 531.90,306.49 532.01,306.46 532.11,306.43 532.21,306.40 532.31,306.37 532.41,306.34 532.51,306.32 532.61,306.29 532.72,306.26 532.82,306.23 532.92,306.20 533.02,307.01 533.12,306.98 533.22,306.95 533.32,306.92 533.43,306.89 533.53,306.86 533.63,306.83 533.73,306.80 533.83,306.77 533.93,306.74 534.03,306.72 534.14,306.69 534.24,306.66 534.34,306.63 534.44,306.60 534.54,306.57 534.64,306.54 534.74,306.51 534.85,306.49 534.95,306.46 535.05,306.43 535.15,306.40 535.25,306.37 535.35,306.34 535.45,306.32 535.56,306.29 535.66,306.26 535.76,306.23 535.86,306.20 535.96,306.99 536.06,306.97 536.16,306.94 536.26,306.91 536.37,306.88 536.47,306.85 536.57,306.82 536.67,306.79 536.77,306.76 536.87,306.74 536.97,306.71 537.08,306.68 537.18,306.65 537.28,306.62 537.38,306.60 537.48,306.57 537.58,306.54 537.68,306.51 537.79,306.48 537.89,306.46 537.99,306.43 538.09,306.40 538.19,306.37 538.29,306.35 538.39,306.32 538.50,306.29 538.60,306.26 538.70,306.24 538.80,307.01 538.90,306.98 539.00,306.95 539.10,306.93 539.21,306.90 539.31,306.87 539.41,306.84 539.51,306.81 539.61,306.78 539.71,306.76 539.81,306.73 539.92,306.70 540.02,306.67 540.12,306.65 540.22,306.62 540.32,306.59 540.42,306.56 540.52,306.54 540.63,306.51 540.73,306.48 540.83,306.45 540.93,306.43 541.03,306.40 541.13,306.37 541.23,306.35 541.34,306.32 541.44,306.29 541.54,306.26 541.64,306.24 541.74,307.00 541.84,306.97 541.94,306.94 542.04,306.91 542.15,306.89 542.25,306.86 542.35,306.83 542.45,306.80 542.55,306.78 542.65,306.75 542.75,306.72 542.86,306.70 542.96,306.67 543.06,306.64 543.16,306.61 543.26,306.59 543.36,306.56 543.46,306.53 543.57,306.51 543.67,306.48 543.77,306.45 543.87,306.43 543.97,306.40 544.07,306.37 544.17,306.35 544.28,306.32 544.38,306.29 544.48,306.27 544.58,306.24 544.68,306.99 544.78,306.96 544.88,306.93 544.99,306.90 545.09,306.88 545.19,306.85 545.29,306.82 545.39,306.80 545.49,306.77 545.59,306.74 545.70,306.72 545.80,306.69 545.90,306.66 546.00,306.64 546.10,306.61 546.20,306.58 546.30,306.56 546.40,306.53 546.51,306.50 546.61,306.48 546.71,306.45 546.81,306.42 546.91,306.40 547.01,306.37 547.11,306.35 547.22,306.32 547.32,306.29 547.42,306.27 547.52,307.00 547.62,306.97 547.72,306.95 547.82,306.92 547.93,306.89 548.03,306.87 548.13,306.84 548.23,306.81 548.33,306.79 548.43,306.76 548.53,306.74 548.64,306.71 548.74,306.68 548.84,306.66 548.94,306.63 549.04,306.60 549.14,306.58 549.24,306.55 549.35,306.53 549.45,306.50 549.55,306.48 549.65,306.45 549.75,306.42 549.85,306.40 549.95,306.37 550.06,306.35 550.16,306.32 550.26,306.30 550.36,306.27 550.46,306.99 550.56,306.96 550.66,306.94 550.77,306.91 550.87,306.88 550.97,306.86 551.07,306.83 551.17,306.81 551.27,306.78 551.37,306.75 551.48,306.73 551.58,306.70 551.68,306.68 551.78,306.65 551.88,306.63 551.98,306.60 552.08,306.57 552.18,306.55 552.29,306.52 552.39,306.50 552.49,306.47 552.59,306.45 552.69,306.42 552.79,306.40 552.89,306.37 553.00,306.35 553.10,306.32 553.20,306.30 553.30,307.00 553.40,306.98 553.50,306.95 553.60,306.93 553.71,306.90 553.81,306.88 553.91,306.85 554.01,306.82 554.11,306.80 554.21,306.77 554.31,306.75 554.42,306.72 554.52,306.70 554.62,306.67 554.72,306.65 554.82,306.62 554.92,306.60 555.02,306.57 555.13,306.55 555.23,306.52 555.33,306.50 555.43,306.47 555.53,306.45 555.63,306.42 555.73,306.40 555.84,306.37 555.94,306.35 556.04,306.32 556.14,306.30 556.24,306.99 556.34,306.97 556.44,306.94 556.54,306.92 556.65,306.89 556.75,306.87 556.85,306.84 556.95,306.82 557.05,306.79 557.15,306.77 557.25,306.74 557.36,306.72 557.46,306.69 557.56,306.67 557.66,306.64 557.76,306.62 557.86,306.59 557.96,306.57 558.07,306.54 558.17,306.52 558.27,306.49 558.37,306.47 558.47,306.45 558.57,306.42 558.67,306.40 558.78,306.37 558.88,306.35 558.98,306.32 559.08,307.01 559.18,306.98 559.28,306.96 559.38,306.93 559.49,306.91 559.59,306.88 559.69,306.86 559.79,306.83 559.89,306.81 559.99,306.78 560.09,306.76 560.20,306.73 560.30,306.71 560.40,306.69 560.50,306.66 560.60,306.64 560.70,306.61 560.80,306.59 560.91,306.56 561.01,306.54 561.11,306.52 561.21,306.49 561.31,306.47 561.41,306.44 561.51,306.42 561.62,306.40 561.72,306.37 561.82,306.35 561.92,306.32 562.02,307.00 562.12,306.97 562.22,306.95 562.32,306.92 562.43,306.90 562.53,306.87 562.63,306.85 562.73,306.83 562.83,306.80 562.93,306.78 563.03,306.75 563.14,306.73 563.24,306.70 563.34,306.68 563.44,306.66 563.54,306.63 563.64,306.61 563.74,306.58 563.85,306.56 563.95,306.54 564.05,306.51 564.15,306.49 564.25,306.47 564.35,306.44 564.45,306.42 564.56,306.40 564.66,306.37 564.76,306.35 564.86,306.33 564.96,306.99 565.06,306.96 565.16,306.94 565.27,306.91 565.37,306.89 565.47,306.87 565.57,306.84 565.67,306.82 565.77,306.79 565.87,306.77 565.98,306.75 566.08,306.72 566.18,306.70 566.28,306.68 566.38,306.65 566.48,306.63 566.58,306.60 566.68,306.58 566.79,306.56 566.89,306.53 566.99,306.51 567.09,306.49 567.19,306.46 567.29,306.44 567.39,306.42 567.50,306.40 567.60,306.37 567.70,306.35 567.80,307.00 567.90,306.98 568.00,306.95 568.10,306.93 568.21,306.90 568.31,306.88 568.41,306.86 568.51,306.83 568.61,306.81 568.71,306.79 568.81,306.76 568.92,306.74 569.02,306.72 569.12,306.69 569.22,306.67 569.32,306.65 569.42,306.62 569.52,306.60 569.63,306.58 569.73,306.55 569.83,306.53 569.93,306.51 570.03,306.49 570.13,306.46 570.23,306.44 570.34,306.42 570.44,306.39 570.54,306.37 570.64,306.35 570.74,306.99 570.84,306.97 570.94,306.94 571.05,306.92 571.15,306.90 571.25,306.87 571.35,306.85 571.45,306.83 571.55,306.80 571.65,306.78 571.75,306.76 571.86,306.73 571.96,306.71 572.06,306.69 572.16,306.67 572.26,306.64 572.36,306.62 572.46,306.60 572.57,306.57 572.67,306.55 572.77,306.53 572.87,306.51 572.97,306.48 573.07,306.46 573.17,306.44 573.28,306.42 573.38,306.39 573.48,306.37 573.58,307.00 573.68,306.98 573.78,306.96 573.88,306.93 573.99,306.91 574.09,306.89 574.19,306.86 574.29,306.84 574.39,306.82 574.49,306.80 574.59,306.77 574.70,306.75 574.80,306.73 574.90,306.71 575.00,306.68 575.10,306.66 575.20,306.64 575.30,306.62 575.41,306.59 575.51,306.57 575.61,306.55 575.71,306.53 575.81,306.50 575.91,306.48 576.01,306.46 576.12,306.44 576.22,306.42 576.32,306.39 576.42,306.37 576.52,306.99 576.62,306.97 576.72,306.95 576.83,306.92 576.93,306.90 577.03,306.88 577.13,306.86 577.23,306.83 577.33,306.81 577.43,306.79 577.53,306.77 577.64,306.74 577.74,306.72 577.84,306.70 577.94,306.68 578.04,306.66 578.14,306.63 578.24,306.61 578.35,306.59 578.45,306.57 578.55,306.55 578.65,306.52 578.75,306.50 578.85,306.48 578.95,306.46 579.06,306.44 579.16,306.42 579.26,306.39 579.36,307.00 579.46,306.98 579.56,306.96 579.66,306.94 579.77,306.92 579.87,306.89 579.97,306.87 580.07,306.85 580.17,306.83 580.27,306.81 580.37,306.78 580.48,306.76 580.58,306.74 580.68,306.72 580.78,306.70 580.88,306.67 580.98,306.65 581.08,306.63 581.19,306.61 581.29,306.59 581.39,306.56 581.49,306.54 581.59,306.52 581.69,306.50 581.79,306.48 581.89,306.46 582.00,306.44 582.10,306.41 582.20,306.39 582.30,306.99 582.40,306.97 582.50,306.95 582.60,306.93 582.71,306.91 582.81,306.89 582.91,306.86 583.01,306.84 583.11,306.82 583.21,306.80 583.31,306.78 583.42,306.76 583.52,306.73 583.62,306.71 583.72,306.69 583.82,306.67 583.92,306.65 584.02,306.63 584.13,306.60 584.23,306.58 584.33,306.56 584.43,306.54 584.53,306.52 584.63,306.50 584.73,306.48 584.84,306.46 584.94,306.43 585.04,306.41 585.14,306.39 585.24,306.99 585.34,306.96 585.44,306.94 585.55,306.92 585.65,306.90 585.75,306.88 585.85,306.86 585.95,306.83 586.05,306.81 586.15,306.79 586.26,306.77 586.36,306.75 586.46,306.73 586.56,306.71 586.66,306.69 586.76,306.66 586.86,306.64 586.97,306.62 587.07,306.60 587.17,306.58 587.27,306.56 587.37,306.54 587.47,306.52 587.57,306.50 587.67,306.48 587.78,306.45 587.88,306.43 587.98,306.41 588.08,307.00 588.18,306.98 588.28,306.95 588.38,306.93 588.49,306.91 588.59,306.89 588.69,306.87 588.79,306.85 588.89,306.83 588.99,306.81 589.09,306.79 589.20,306.76 589.30,306.74 589.40,306.72 589.50,306.70"/>
<polyline fill="none" stroke="#1a1a1a" stroke-width="1.05" points="598.50,415.50 605.50,415.50 605.50,345.50 611.50,345.50 611.50,306.50 617.50,306.50 617.50,292.50 623.50,292.50 623.50,289.50 630.50,289.50 630.50,288.50 636.50,288.50 636.50,288.50 642.50,288.50 642.50,288.50 648.50,288.50 648.50,288.50 655.50,288.50 655.50,288.50 661.50,288.50 661.50,288.50 667.50,288.50 667.50,288.50 674.50,288.50 674.50,288.50 680.50,288.50 680.50,288.50 686.50,288.50 686.50,288.50 692.50,288.50 692.50,288.50 699.50,288.50 699.50,288.50 705.50,288.50 705.50,288.50 711.50,288.50 711.50,288.50 717.50,288.50 717.50,288.50 724.50,288.50 724.50,288.50 730.50,288.50 730.50,288.50 736.50,288.50 736.50,288.50 742.50,288.50 742.50,288.50 749.50,288.50 749.50,288.50 755.50,288.50 755.50,288.50 761.50,288.50 761.50,288.50 767.50,288.50 767.50,288.50 774.50,288.50 774.50,288.50 780.50,288.50 780.50,288.50 786.50,288.50 786.50,288.50 792.50,288.50 792.50,288.50 799.50,288.50"/>
<polyline fill="none" stroke="#1a1a1a" stroke-width="1.05" points="809.30,288.40 809.70,288.40 810.10,288.42 810.50,288.50 810.90,288.68 811.30,288.97 811.70,289.40 812.10,289.98 812.50,290.73 812.90,291.64 813.30,292.74 813.70,294.01 814.10,295.46 814.50,297.09 814.90,298.88 815.30,300.84 815.70,302.96 816.10,305.23 816.50,307.64 816.90,310.18 817.30,312.84 817.70,315.61 818.10,318.49 818.50,321.46 818.90,324.51 819.30,327.63 819.70,330.81 820.10,334.05 820.50,337.33 820.90,340.64 821.30,343.98 821.70,347.33 822.10,350.70 822.50,354.06 822.90,357.43 823.30,360.78 823.70,364.11 824.10,367.42 824.50,370.69 824.90,373.94 825.30,377.15 825.70,380.31 826.10,383.43 826.50,386.49 826.90,389.51 827.30,392.47 827.70,395.37 828.10,398.21 828.50,400.99 828.90,403.70 829.30,406.35 829.70,408.94 830.10,411.46 830.50,413.91 830.90,416.29 831.30,418.61 831.70,420.86 832.10,423.04 832.50,425.15 832.90,427.20 833.30,429.18 833.70,431.10 834.10,432.95 834.50,434.74 834.90,436.47 835.30,438.14 835.70,439.74 836.10,441.29 836.50,442.78 836.90,444.21 837.30,445.59 837.70,446.91 838.10,448.18 838.50,449.40 838.90,450.57 839.30,451.70 839.70,452.77 840.10,453.80 840.50,454.79 840.90,455.73 841.30,456.64 841.70,457.50 842.10,458.32 842.50,459.11 842.90,459.86 843.30,460.58 843.70,461.26 844.10,461.91 844.50,462.53 844.90,463.13 845.30,463.69 845.70,464.22 846.10,464.73 846.50,465.22 846.90,465.68 847.30,466.12 847.70,466.53 848.10,466.93 848.50,467.30 848.90,467.65 849.30,467.99 849.70,468.31 850.10,468.61 850.50,468.90 850.90,469.17 851.30,469.42 851.70,469.67 852.10,469.89 852.50,470.11 852.90,470.31 853.30,470.51 853.70,470.69 854.10,470.86 854.50,471.02 854.90,471.18 855.30,471.32 855.70,471.46 856.10,471.59 856.50,471.71 856.90,471.82 857.30,471.93 857.70,472.03 858.10,472.12 858.50,472.21 858.90,472.30 859.30,472.37 859.70,472.45 860.10,472.52 860.50,472.58 860.90,472.64 861.30,472.70 861.70,472.75 862.10,472.80 862.50,472.85 862.90,472.89 863.30,472.94 863.70,472.97 864.10,473.01 864.50,473.04 864.90,473.08 865.30,473.11 865.70,473.13 866.10,473.16 866.50,473.18 866.90,473.21 867.30,473.23 867.70,473.25 868.10,473.26 868.50,473.28 868.90,473.30 869.30,473.31 869.70,473.33 870.10,473.34 870.50,473.35 870.90,473.36 871.30,473.37 871.70,473.38 872.10,473.39 872.50,473.40 872.90,473.41 873.30,473.41 873.70,473.42 874.10,473.43 874.50,473.43 874.90,473.44 875.30,473.44 875.70,473.45 876.10,473.45 876.50,473.45 876.90,473.46 877.30,473.46 877.70,473.46 878.10,473.47 878.50,473.47 878.90,473.47 879.30,473.47 879.70,473.48 880.10,473.48 880.50,473.48 880.90,473.48 881.30,473.48 881.70,473.48 882.10,473.49 882.50,473.49 882.90,473.49 883.30,473.49 883.70,473.49 884.10,473.49 884.50,473.49 884.90,473.49 885.30,473.49 885.70,473.49 886.10,473.49 886.50,473.49 886.90,473.50 887.30,473.50 887.70,473.50 888.10,473.50 888.50,473.50 888.90,473.50 889.30,473.50 889.70,473.50 890.10,473.50 890.50,473.50 890.90,473.50 891.30,473.50 891.70,473.50 892.10,473.50 892.50,473.50 892.90,473.50 893.30,473.50 893.70,473.50 894.10,473.50 894.50,473.50 894.90,473.50 895.30,473.50 895.70,473.50 896.10,473.50 896.50,473.50 896.90,473.50 897.30,473.50 897.70,473.50 898.10,473.50 898.50,473.50 898.90,473.50 899.30,473.50 899.70,473.50 900.10,473.50 900.50,473.50 900.90,473.50 901.30,473.50 901.70,473.50 902.10,473.50 902.50,473.50 902.90,473.50 903.30,473.50 903.70,473.50 904.10,473.50 904.50,473.50 904.90,473.50 905.30,473.50 905.70,473.50 906.10,473.50 906.50,473.50 906.90,473.50 907.30,473.50 907.70,473.50 908.10,473.50 908.50,473.50 908.90,473.50 909.30,473.50 909.70,473.50 910.10,473.50 910.50,473.50 910.90,473.50 911.30,473.50 911.70,473.50 912.10,473.50 912.50,473.50 912.90,473.50 913.30,473.50 913.70,473.50 914.10,473.50 914.50,473.50 914.90,473.50 915.30,473.50 915.70,473.50 916.10,473.50 916.50,473.50 916.90,473.50 917.30,473.50 917.70,473.50 918.10,473.50 918.50,473.50 918.90,473.50 919.30,473.50 919.70,473.50 920.10,473.50 920.50,473.50 920.90,473.50 921.30,473.50 921.70,473.50 922.10,473.50 922.50,473.50 922.90,473.50 923.30,473.50 923.70,473.50 924.10,473.50 924.50,473.50 924.90,473.50 925.30,473.50 925.70,473.50 926.10,473.50 926.50,473.50 926.90,473.50 927.30,473.50 927.70,473.50 928.10,473.50 928.50,473.50 928.90,473.50 929.30,473.50 929.70,473.50 930.10,473.50 930.50,473.50 930.90,473.50 931.30,473.50 931.70,473.50 932.10,473.50 932.50,473.50 932.90,473.50 933.30,473.50 933.70,473.50 934.10,473.50 934.50,473.50 934.90,473.50 935.30,473.50 935.70,473.50 936.10,473.50 936.50,473.50 936.90,473.50 937.30,473.50 937.70,473.50 938.10,473.50 938.50,473.50 938.90,473.50 939.30,473.50 939.70,473.50 940.10,473.50 940.50,473.50 940.90,473.50 941.30,473.50 941.70,473.50 942.10,473.50 942.50,473.50 942.90,473.50 943.30,473.50 943.70,473.50 944.10,473.50 944.50,473.50 944.90,473.50 945.30,473.50 945.70,473.50 946.10,473.50 946.50,473.50 946.90,473.50 947.30,473.50 947.70,473.50 948.10,473.50 948.50,473.50 948.90,473.50 949.30,473.50 949.70,473.50 950.10,473.50 950.50,473.50 950.90,473.50 951.30,473.50 951.70,473.50 952.10,473.50 952.50,473.50 952.90,473.50 953.30,473.50 953.70,473.50 954.10,473.50 954.50,473.50 954.90,473.50 955.30,473.50 955.70,473.50 956.10,473.50 956.50,473.50 956.90,473.50 957.30,473.50 957.70,473.50 958.10,473.50 958.50,473.50 958.90,473.50 959.30,473.50 959.70,473.50 960.10,473.50 960.50,473.50 960.90,473.50 961.30,473.50 961.70,473.50 962.10,473.50 962.50,473.50 962.90,473.50 963.30,473.50 963.70,473.50 964.10,473.50 964.50,473.50 964.90,473.50 965.30,473.50 965.70,473.50 966.10,473.50 966.50,473.50 966.90,473.50 967.30,473.50 967.70,473.50 968.10,473.50 968.50,473.50 968.90,473.50 969.30,473.50 969.70,473.50 970.10,473.50 970.50,473.50 970.90,473.50 971.30,473.50 971.70,473.50 972.10,473.50 972.50,473.50 972.90,473.50 973.30,473.50 973.70,473.50 974.10,473.50 974.50,473.50 974.90,473.50 975.30,473.50 975.70,473.50 976.10,473.50 976.50,473.50 976.90,473.50 977.30,473.50 977.70,473.50 978.10,473.50 978.50,473.50 978.90,473.50 979.30,473.50 979.70,473.50 980.10,473.50 980.50,473.50 980.90,473.50 981.30,473.50 981.70,473.50 982.10,473.50 982.50,473.50 982.90,473.50 983.30,473.50 983.70,473.50 984.10,473.50 984.50,473.50 984.90,473.50 985.30,473.50 985.70,473.50 986.10,473.50 986.50,473.50 986.90,473.50 987.30,473.50 987.70,473.50 988.10,473.50 988.50,473.50 988.90,473.50 989.30,473.50 989.70,473.50 990.10,473.50 990.50,473.50 990.90,473.50 991.30,473.50 991.70,473.50 992.10,473.50 992.50,473.50 992.90,473.50 993.30,473.50 993.70,473.50 994.10,473.50 994.50,473.50 994.90,473.50 995.30,473.50 995.70,473.50 996.10,473.50 996.50,473.50 996.90,473.50 997.30,473.50 997.70,473.50 998.10,473.50 998.50,473.50 998.90,473.50 999.30,473.50 999.70,473.50 1000.10,473.50 1000.50,473.50 1000.90,473.50 1001.30,473.50 1001.70,473.50 1002.10,473.50 1002.50,473.50 1002.90,473.50 1003.30,473.50 1003.70,473.50 1004.10,473.50 1004.50,473.50 1004.90,473.50 1005.30,473.50 1005.70,473.50 1006.10,473.50 1006.50,473.50 1006.90,473.50 1007.30,473.50 1007.70,473.50 1008.10,473.50 1008.50,473.50 1008.90,473.50 1009.30,473.50"/>
<line x1="179" y1="306.5" x2="377" y2="306.5" stroke="#f0102e" stroke-width="1" stroke-dasharray="2,2" />
<line x1="185.5" y1="284" x2="185.5" y2="482" stroke="#f0102e" stroke-width="1" stroke-dasharray="2,2" />
<line x1="389" y1="306.5" x2="589" y2="306.5" stroke="#f0102e" stroke-width="1" stroke-dasharray="2,2" />
<line x1="487.5" y1="284" x2="487.5" y2="482" stroke="#f0102e" stroke-width="1" stroke-dasharray="2,2" />
<line x1="599" y1="306.5" x2="797" y2="306.5" stroke="#f0102e" stroke-width="1" stroke-dasharray="2,2" />
<line x1="611.5" y1="284" x2="611.5" y2="482" stroke="#f0102e" stroke-width="1" stroke-dasharray="2,2" />
<line x1="809" y1="306.5" x2="1008" y2="306.5" stroke="#f0102e" stroke-width="1" stroke-dasharray="2,2" />
<line x1="816.5" y1="284" x2="816.5" y2="482" stroke="#f0102e" stroke-width="1" stroke-dasharray="2,2" />
<line x1="829.5" y1="278" x2="829.5" y2="485" stroke="#3a7af0" stroke-width="1" stroke-dasharray="6,6" />
<line x1="829.5" y1="485" x2="829.5" y2="491.5" stroke="#3a7af0" stroke-width="1" />
<line x1="849.5" y1="278" x2="849.5" y2="485" stroke="#e37a12" stroke-width="1" stroke-dasharray="6,6" />
<line x1="849.5" y1="485" x2="849.5" y2="491.5" stroke="#e37a12" stroke-width="1" />
<line x1="179.5" y1="486" x2="179.5" y2="491.5" stroke="#a3a3a3" stroke-width="1" />
<text transform="translate(184.10,493) rotate(-90)" text-anchor="end" font-size="13.5" fill="#000" textLength="6.95" lengthAdjust="spacingAndGlyphs">0</text>
<line x1="229.5" y1="486" x2="229.5" y2="491.5" stroke="#a3a3a3" stroke-width="1" />
<text transform="translate(234.10,493) rotate(-90)" text-anchor="end" font-size="13.5" fill="#000" textLength="20.86" lengthAdjust="spacingAndGlyphs">250</text>
<line x1="279.5" y1="486" x2="279.5" y2="491.5" stroke="#a3a3a3" stroke-width="1" />
<text transform="translate(284.10,493) rotate(-90)" text-anchor="end" font-size="13.5" fill="#000" textLength="20.86" lengthAdjust="spacingAndGlyphs">500</text>
<line x1="329.5" y1="486" x2="329.5" y2="491.5" stroke="#a3a3a3" stroke-width="1" />
<text transform="translate(334.10,493) rotate(-90)" text-anchor="end" font-size="13.5" fill="#000" textLength="20.86" lengthAdjust="spacingAndGlyphs">750</text>
<line x1="379.5" y1="486" x2="379.5" y2="491.5" stroke="#a3a3a3" stroke-width="1" />
<text transform="translate(384.10,493) rotate(-90)" text-anchor="end" font-size="13.5" fill="#000" textLength="27.81" lengthAdjust="spacingAndGlyphs">1000</text>
<line x1="437.5" y1="486" x2="437.5" y2="491.5" stroke="#a3a3a3" stroke-width="1" />
<text transform="translate(442.10,493) rotate(-90)" text-anchor="end" font-size="13.5" fill="#000" textLength="20.86" lengthAdjust="spacingAndGlyphs">500</text>
<line x1="488.5" y1="486" x2="488.5" y2="491.5" stroke="#a3a3a3" stroke-width="1" />
<text transform="translate(493.10,493) rotate(-90)" text-anchor="end" font-size="13.5" fill="#000" textLength="27.81" lengthAdjust="spacingAndGlyphs">1000</text>
<line x1="538.5" y1="486" x2="538.5" y2="491.5" stroke="#a3a3a3" stroke-width="1" />
<text transform="translate(543.10,493) rotate(-90)" text-anchor="end" font-size="13.5" fill="#000" textLength="27.81" lengthAdjust="spacingAndGlyphs">1500</text>
<line x1="589.5" y1="486" x2="589.5" y2="491.5" stroke="#a3a3a3" stroke-width="1" />
<text transform="translate(594.10,493) rotate(-90)" text-anchor="end" font-size="13.5" fill="#000" textLength="27.81" lengthAdjust="spacingAndGlyphs">2000</text>
<line x1="599.5" y1="486" x2="599.5" y2="491.5" stroke="#a3a3a3" stroke-width="1" />
<text transform="translate(604.10,493) rotate(-90)" text-anchor="end" font-size="13.5" fill="#000" textLength="6.95" lengthAdjust="spacingAndGlyphs">0</text>
<line x1="611.5" y1="486" x2="611.5" y2="491.5" stroke="#a3a3a3" stroke-width="1" />
<line x1="624.5" y1="486" x2="624.5" y2="491.5" stroke="#a3a3a3" stroke-width="1" />
<text transform="translate(629.10,493) rotate(-90)" text-anchor="end" font-size="13.5" fill="#000" textLength="6.95" lengthAdjust="spacingAndGlyphs">4</text>
<line x1="636.5" y1="486" x2="636.5" y2="491.5" stroke="#a3a3a3" stroke-width="1" />
<line x1="649.5" y1="486" x2="649.5" y2="491.5" stroke="#a3a3a3" stroke-width="1" />
<text transform="translate(654.10,493) rotate(-90)" text-anchor="end" font-size="13.5" fill="#000" textLength="6.95" lengthAdjust="spacingAndGlyphs">8</text>
<line x1="662.5" y1="486" x2="662.5" y2="491.5" stroke="#a3a3a3" stroke-width="1" />
<line x1="674.5" y1="486" x2="674.5" y2="491.5" stroke="#a3a3a3" stroke-width="1" />
<text transform="translate(679.10,493) rotate(-90)" text-anchor="end" font-size="13.5" fill="#000" textLength="13.90" lengthAdjust="spacingAndGlyphs">12</text>
<line x1="687.5" y1="486" x2="687.5" y2="491.5" stroke="#a3a3a3" stroke-width="1" />
<line x1="699.5" y1="486" x2="699.5" y2="491.5" stroke="#a3a3a3" stroke-width="1" />
<text transform="translate(704.10,493) rotate(-90)" text-anchor="end" font-size="13.5" fill="#000" textLength="13.90" lengthAdjust="spacingAndGlyphs">16</text>
<line x1="712.5" y1="486" x2="712.5" y2="491.5" stroke="#a3a3a3" stroke-width="1" />
<line x1="724.5" y1="486" x2="724.5" y2="491.5" stroke="#a3a3a3" stroke-width="1" />
<text transform="translate(729.10,493) rotate(-90)" text-anchor="end" font-size="13.5" fill="#000" textLength="13.90" lengthAdjust="spacingAndGlyphs">20</text>
<line x1="737.5" y1="486" x2="737.5" y2="491.5" stroke="#a3a3a3" stroke-width="1" />
<line x1="749.5" y1="486" x2="749.5" y2="491.5" stroke="#a3a3a3" stroke-width="1" />
<text transform="translate(754.10,493) rotate(-90)" text-anchor="end" font-size="13.5" fill="#000" textLength="13.90" lengthAdjust="spacingAndGlyphs">24</text>
<line x1="762.5" y1="486" x2="762.5" y2="491.5" stroke="#a3a3a3" stroke-width="1" />
<line x1="774.5" y1="486" x2="774.5" y2="491.5" stroke="#a3a3a3" stroke-width="1" />
<text transform="translate(779.10,493) rotate(-90)" text-anchor="end" font-size="13.5" fill="#000" textLength="13.90" lengthAdjust="spacingAndGlyphs">28</text>
<line x1="787.5" y1="486" x2="787.5" y2="491.5" stroke="#a3a3a3" stroke-width="1" />
<line x1="799.5" y1="486" x2="799.5" y2="491.5" stroke="#a3a3a3" stroke-width="1" />
<text transform="translate(804.10,493) rotate(-90)" text-anchor="end" font-size="13.5" fill="#000" textLength="13.90" lengthAdjust="spacingAndGlyphs">32</text>
<line x1="809.5" y1="486" x2="809.5" y2="491.5" stroke="#a3a3a3" stroke-width="1" />
<text transform="translate(814.10,493) rotate(-90)" text-anchor="end" font-size="13.5" fill="#000" textLength="6.95" lengthAdjust="spacingAndGlyphs">0</text>
<line x1="859.5" y1="486" x2="859.5" y2="491.5" stroke="#a3a3a3" stroke-width="1" />
<line x1="909.5" y1="486" x2="909.5" y2="491.5" stroke="#a3a3a3" stroke-width="1" />
<text transform="translate(914.10,493) rotate(-90)" text-anchor="end" font-size="13.5" fill="#000" textLength="24.33" lengthAdjust="spacingAndGlyphs">0.50</text>
<line x1="959.5" y1="486" x2="959.5" y2="491.5" stroke="#a3a3a3" stroke-width="1" />
<text transform="translate(964.10,493) rotate(-90)" text-anchor="end" font-size="13.5" fill="#000" textLength="24.33" lengthAdjust="spacingAndGlyphs">0.75</text>
<line x1="1009.5" y1="486" x2="1009.5" y2="491.5" stroke="#a3a3a3" stroke-width="1" />
<text transform="translate(1014.10,493) rotate(-90)" text-anchor="end" font-size="13.5" fill="#000" textLength="24.33" lengthAdjust="spacingAndGlyphs">1.00</text>
<text transform="translate(834.50,493) rotate(-90)" text-anchor="end" font-size="13.5" fill="#3a7af0" textLength="24" lengthAdjust="spacingAndGlyphs">AQL</text>
<text transform="translate(854.50,493) rotate(-90)" text-anchor="end" font-size="13.5" fill="#e37a12" textLength="24" lengthAdjust="spacingAndGlyphs">RQL</text>
<text x="270.60" y="551.70" font-size="12.5" font-weight="normal" fill="#e8203f" textLength="12.42" lengthAdjust="spacingAndGlyphs" >32</text>
<text x="242.57" y="572.80" font-size="13.33" font-weight="normal" fill="#000" textLength="69.47" lengthAdjust="spacingAndGlyphs" >Sample Size</text>
<text x="473.24" y="551.70" font-size="12.5" font-weight="normal" fill="#e8203f" textLength="26.78" lengthAdjust="spacingAndGlyphs" >1000</text>
<text x="465.08" y="572.80" font-size="13.33" font-weight="normal" fill="#000" textLength="44.48" lengthAdjust="spacingAndGlyphs" >Lot Size</text>
<text x="694.20" y="531.90" font-size="12.5" font-weight="normal" fill="#e8203f" >2</text>
<text x="665.38" y="553.80" font-size="13.33" font-weight="normal" fill="#000" textLength="63.34" lengthAdjust="spacingAndGlyphs" >Number of</text>
<text x="665.47" y="572.50" font-size="13.33" font-weight="normal" fill="#000" textLength="43.90" lengthAdjust="spacingAndGlyphs" >Failures</text>
<text x="893.50" y="531.90" font-size="12.5" font-weight="normal" fill="#e8203f" textLength="29.77" lengthAdjust="spacingAndGlyphs" >0.035</text>
<text x="880.94" y="552.80" font-size="13.33" font-weight="normal" fill="#000" textLength="46.11" lengthAdjust="spacingAndGlyphs" >Fraction</text>
<text x="880.95" y="572.50" font-size="13.33" font-weight="normal" fill="#000" textLength="52.89" lengthAdjust="spacingAndGlyphs" >Defective</text>
<rect x="35.3" y="586.5" width="121.50000000000001" height="20.100000000000023" fill="#fff" stroke="#dcdcdc" stroke-width="1" rx="3.5" />
<path d="M37.8,606.5 H154.3" stroke="#d2d2d2" stroke-width="1"/>
<text x="38.74" y="602.00" font-size="13.33" font-weight="normal" fill="#000" textLength="113.25" lengthAdjust="spacingAndGlyphs" >Remember Settings</text>
<rect x="163.3" y="586.5" width="106.19999999999999" height="20.100000000000023" fill="#fff" stroke="#dcdcdc" stroke-width="1" rx="3.5" />
<path d="M165.8,606.5 H267" stroke="#d2d2d2" stroke-width="1"/>
<text x="166.22" y="602.00" font-size="13.33" font-weight="normal" fill="#000" textLength="99.91" lengthAdjust="spacingAndGlyphs" >Reset to Defaults</text>
<rect x="276.5" y="586.5" width="57.39999999999998" height="20.100000000000023" fill="#fff" stroke="#dcdcdc" stroke-width="1" rx="3.5" />
<path d="M279,606.5 H331.4" stroke="#d2d2d2" stroke-width="1"/>
<text x="290.41" y="602.00" font-size="13.33" font-weight="normal" fill="#000" textLength="27.21" lengthAdjust="spacingAndGlyphs" >Help</text>
<rect x="48.5" y="612.5" width="865" height="23" fill="#ebebeb" stroke="#c3c3c3" stroke-width="1" rx="0" />
<polygon points="35.6,619.4 44.300000000000004,619.4 39.95,626.3" fill="#b4b4b4" stroke="#8e8e8e" stroke-width="0.9" stroke-linejoin="miter"/>
<rect x="51.9" y="617.9" width="13.40000000000001" height="11.200000000000092" fill="#ededed" stroke="#c8c8c8" stroke-width="1.2" rx="3.5" />
<polygon points="54.4,621.6 62.800000000000004,621.6 58.6,626.2" fill="#d80000"/>
<text x="68.21" y="628.60" font-size="16" font-weight="bold" fill="#000" textLength="166.73" lengthAdjust="spacingAndGlyphs" >Remembered Settings</text>
<rect x="49" y="640" width="21" height="36" fill="#e5e5e5" stroke="none" stroke-width="1" rx="0" />
<rect x="72" y="640" width="58" height="36" fill="#e5e5e5" stroke="none" stroke-width="1" rx="0" />
<rect x="131" y="640" width="84" height="36" fill="#e5e5e5" stroke="none" stroke-width="1" rx="0" />
<rect x="216" y="640" width="70" height="36" fill="#e5e5e5" stroke="none" stroke-width="1" rx="0" />
<rect x="287" y="640" width="78" height="36" fill="#e5e5e5" stroke="none" stroke-width="1" rx="0" />
<rect x="366" y="640" width="70" height="36" fill="#e5e5e5" stroke="none" stroke-width="1" rx="0" />
<rect x="437" y="640" width="83" height="36" fill="#e5e5e5" stroke="none" stroke-width="1" rx="0" />
<rect x="521" y="640" width="70" height="36" fill="#e5e5e5" stroke="none" stroke-width="1" rx="0" />
<rect x="592" y="640" width="70" height="36" fill="#e5e5e5" stroke="none" stroke-width="1" rx="0" />
<rect x="663" y="640" width="85" height="36" fill="#e5e5e5" stroke="none" stroke-width="1" rx="0" />
<rect x="749" y="640" width="82" height="36" fill="#e5e5e5" stroke="none" stroke-width="1" rx="0" />
<rect x="832" y="640" width="81" height="36" fill="#e5e5e5" stroke="none" stroke-width="1" rx="0" />
<text x="74.50" y="671.50" font-size="14.2" font-weight="bold" fill="#000" textLength="42.97" lengthAdjust="spacingAndGlyphs" >Setting</text>
<text x="138.30" y="671.50" font-size="14.2" font-weight="bold" fill="#000" textLength="72.54" lengthAdjust="spacingAndGlyphs" >Sample Size</text>
<text x="233.51" y="671.50" font-size="14.2" font-weight="bold" fill="#000" textLength="48.64" lengthAdjust="spacingAndGlyphs" >Lot Size</text>
<text x="293.56" y="654.20" font-size="14.2" font-weight="bold" fill="#000" textLength="66.78" lengthAdjust="spacingAndGlyphs" >Number of</text>
<text x="312.62" y="671.50" font-size="14.2" font-weight="bold" fill="#000" textLength="48.16" lengthAdjust="spacingAndGlyphs" >Failures</text>
<text x="381.49" y="654.20" font-size="14.2" font-weight="bold" fill="#000" textLength="50.89" lengthAdjust="spacingAndGlyphs" >Fraction</text>
<text x="373.28" y="671.50" font-size="14.2" font-weight="bold" fill="#000" textLength="58.31" lengthAdjust="spacingAndGlyphs" >Defective</text>
<text x="439.40" y="654.20" font-size="14.2" font-weight="bold" fill="#000" textLength="57.78" lengthAdjust="spacingAndGlyphs" >Sampling</text>
<text x="439.40" y="671.50" font-size="14.2" font-weight="bold" fill="#000" textLength="29.56" lengthAdjust="spacingAndGlyphs" >Type</text>
<text x="561.60" y="671.50" font-size="14.2" font-weight="bold" fill="#000" textLength="24.56" lengthAdjust="spacingAndGlyphs" >AQL</text>
<text x="631.45" y="671.50" font-size="14.2" font-weight="bold" fill="#000" textLength="25.41" lengthAdjust="spacingAndGlyphs" >RQL</text>
<text x="678.61" y="654.20" font-size="14.2" font-weight="bold" fill="#000" textLength="65.59" lengthAdjust="spacingAndGlyphs" >Producer's</text>
<text x="667.77" y="671.50" font-size="14.2" font-weight="bold" fill="#000" textLength="76.65" lengthAdjust="spacingAndGlyphs" >Risk (Alpha)</text>
<text x="755.20" y="654.20" font-size="14.2" font-weight="bold" fill="#000" textLength="71.69" lengthAdjust="spacingAndGlyphs" >Consumer's</text>
<text x="760.81" y="671.50" font-size="14.2" font-weight="bold" fill="#000" textLength="65.80" lengthAdjust="spacingAndGlyphs" >Risk (Beta)</text>
<text x="840.20" y="654.20" font-size="14.2" font-weight="bold" fill="#000" textLength="68.11" lengthAdjust="spacingAndGlyphs" >Acceptance</text>
<text x="839.97" y="671.50" font-size="14.2" font-weight="bold" fill="#000" textLength="68.00" lengthAdjust="spacingAndGlyphs" >Probability</text>
<circle cx="55" cy="687" r="5.6" fill="#ededed" stroke="#8e8e8e" stroke-width="1.1"/>
<rect x="71.5" y="677.5" width="57.5" height="18.6" fill="#fff" stroke="#8c8c8c" stroke-width="1.2" rx="0" />
<text x="73.54" y="691.00" font-size="13.33" font-weight="normal" fill="#000" textLength="50.35" lengthAdjust="spacingAndGlyphs" >Setting 1</text>
<text x="196.80" y="691.00" font-size="12.5" font-weight="normal" fill="#000" textLength="13.51" lengthAdjust="spacingAndGlyphs" >44</text>
<text x="254.11" y="691.00" font-size="12.5" font-weight="normal" fill="#000" textLength="27.50" lengthAdjust="spacingAndGlyphs" >1000</text>
<text x="353.40" y="691.00" font-size="12.5" font-weight="normal" fill="#000" >2</text>
<text x="401.20" y="691.00" font-size="12.5" font-weight="normal" fill="#000" textLength="30.57" lengthAdjust="spacingAndGlyphs" >0.035</text>
<text x="438.42" y="691.00" font-size="13.33" font-weight="normal" fill="#000" textLength="76.57" lengthAdjust="spacingAndGlyphs" >Lot Sampling</text>
<text x="570.30" y="691.00" font-size="12.5" font-weight="normal" fill="#000" textLength="16.27" lengthAdjust="spacingAndGlyphs" >0.1</text>
<text x="641.10" y="691.00" font-size="12.5" font-weight="normal" fill="#000" textLength="16.16" lengthAdjust="spacingAndGlyphs" >0.2</text>
<text x="685.30" y="691.00" font-size="12.5" font-weight="normal" fill="#000" textLength="58.49" lengthAdjust="spacingAndGlyphs" >0.8358023</text>
<text x="768.20" y="691.00" font-size="12.5" font-weight="normal" fill="#000" textLength="58.39" lengthAdjust="spacingAndGlyphs" >0.0033358</text>
<text x="850.00" y="691.00" font-size="12.5" font-weight="normal" fill="#000" textLength="58.69" lengthAdjust="spacingAndGlyphs" >0.8038178</text>
<circle cx="55" cy="707" r="5.6" fill="#ededed" stroke="#8e8e8e" stroke-width="1.1"/>
<rect x="71.5" y="697.6" width="57.5" height="18.6" fill="#fff" stroke="#8c8c8c" stroke-width="1.2" rx="0" />
<text x="73.54" y="711.00" font-size="13.33" font-weight="normal" fill="#000" textLength="50.35" lengthAdjust="spacingAndGlyphs" >Setting 2</text>
<text x="196.80" y="711.00" font-size="12.5" font-weight="normal" fill="#000" textLength="13.51" lengthAdjust="spacingAndGlyphs" >32</text>
<text x="254.11" y="711.00" font-size="12.5" font-weight="normal" fill="#000" textLength="27.50" lengthAdjust="spacingAndGlyphs" >1000</text>
<text x="353.40" y="711.00" font-size="12.5" font-weight="normal" fill="#000" >2</text>
<text x="401.20" y="711.00" font-size="12.5" font-weight="normal" fill="#000" textLength="30.57" lengthAdjust="spacingAndGlyphs" >0.035</text>
<text x="438.42" y="711.00" font-size="13.33" font-weight="normal" fill="#000" textLength="76.57" lengthAdjust="spacingAndGlyphs" >Lot Sampling</text>
<text x="570.30" y="711.00" font-size="12.5" font-weight="normal" fill="#000" textLength="16.27" lengthAdjust="spacingAndGlyphs" >0.1</text>
<text x="641.10" y="711.00" font-size="12.5" font-weight="normal" fill="#000" textLength="16.16" lengthAdjust="spacingAndGlyphs" >0.2</text>
<text x="685.30" y="711.00" font-size="12.5" font-weight="normal" fill="#000" textLength="58.49" lengthAdjust="spacingAndGlyphs" >0.6372383</text>
<text x="768.20" y="711.00" font-size="12.5" font-weight="normal" fill="#000" textLength="58.39" lengthAdjust="spacingAndGlyphs" >0.0297682</text>
<text x="850.00" y="711.00" font-size="12.5" font-weight="normal" fill="#000" textLength="58.69" lengthAdjust="spacingAndGlyphs" >0.9026754</text>
</svg>
</body></html>
